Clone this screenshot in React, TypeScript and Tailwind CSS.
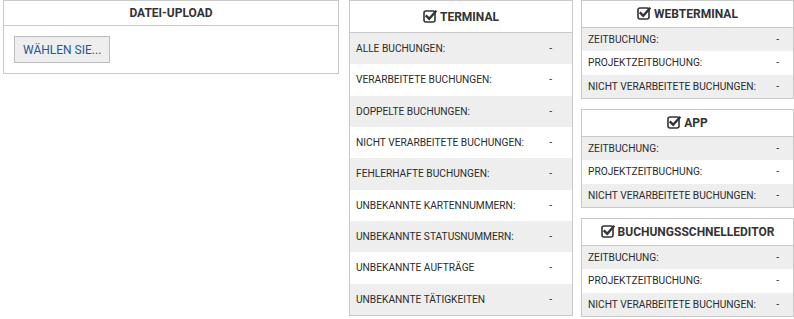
import React from 'react';

const CheckSquare = () => (
  <svg width="14" height="14" viewBox="0 0 14 14" className="inline-block mr-[3px] -mt-[2px]">
    <rect x="1" y="2" width="11" height="11" rx="2" fill="none" stroke="#333" strokeWidth="1.6" />
    <path d="M3.6 7.2 L6.2 9.8 L12.6 2.6" fill="none" stroke="#333" strokeWidth="2.4" strokeLinecap="square" />
  </svg>
);

interface PanelProps {
  title: string;
  rows: string[];
  headerClass: string;
  rowClass: string;
  valueClass: string;
}

const StatPanel: React.FC<PanelProps> = ({ title, rows, headerClass, rowClass, valueClass }) => (
  <div className="border border-[#c9c9c9] bg-white">
    <div className={`flex items-center justify-center border-b border-[#c9c9c9] text-[12px] font-bold text-[#333] ${headerClass}`}>
      <CheckSquare />
      <span>{title}</span>
    </div>
    {rows.map((label, i) => (
      <div
        key={label}
        className={`flex items-center justify-between pl-[6px] text-[10.2px] text-[#2b2b2b] ${rowClass} ${i % 2 === 0 ? 'bg-[#eeeeee]' : 'bg-white'}`}
      >
        <span>{label}</span>
        <span className={valueClass}>-</span>
      </div>
    ))}
  </div>
);

const terminalRows = [
  'ALLE BUCHUNGEN:',
  'VERARBEITETE BUCHUNGEN:',
  'DOPPELTE BUCHUNGEN:',
  'NICHT VERARBEITETE BUCHUNGEN:',
  'FEHLERHAFTE BUCHUNGEN:',
  'UNBEKANNTE KARTENNUMMERN:',
  'UNBEKANNTE STATUSNUMMERN:',
  'UNBEKANNTE AUFTRÄGE',
  'UNBEKANNTE TÄTIGKEITEN',
];

const smallRows = ['ZEITBUCHUNG:', 'PROJEKTZEITBUCHUNG:', 'NICHT VERARBEITETE BUCHUNGEN:'];

export default function App() {
  return (
    <div className="flex h-[319px] w-[794px] bg-white pl-[3px] font-['Roboto',sans-serif]">
      <div className="w-[336px]">
        <div className="border border-[#c9c9c9]">
          <div className="flex h-[25px] items-center justify-center border-b border-[#c9c9c9] text-[12px] font-bold text-[#333]">
            DATEI-UPLOAD
          </div>
          <div className="px-[10px] py-[10px]">
            <button className="h-[27px] border border-[#bdbdbd] bg-[#eeeeee] px-[8px] text-[12px] text-[#1f5a96]">
              WÄHLEN SIE...
            </button>
          </div>
        </div>
      </div>

      <div className="ml-[10px] w-[224px]">
        <StatPanel
          title="TERMINAL"
          rows={terminalRows}
          headerClass="h-[32px]"
          rowClass="h-[31.33px]"
          valueClass="pr-[20px]"
        />
      </div>

      <div className="ml-[8px] flex w-[213px] flex-col gap-[10px]">
        {['WEBTERMINAL', 'APP', 'BUCHUNGSSCHNELLEDITOR'].map((t) => (
          <StatPanel
            key={t}
            title={t}
            rows={smallRows}
            headerClass="h-[27px]"
            rowClass="h-[23.33px]"
            valueClass="pr-[14px]"
          />
        ))}
      </div>
    </div>
  );
}
